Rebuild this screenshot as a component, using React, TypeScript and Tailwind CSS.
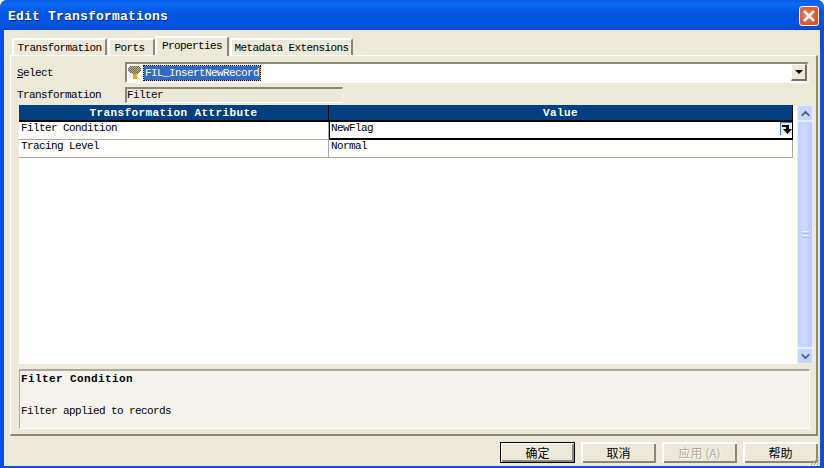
import { ChevronDown, ChevronUp } from 'lucide-react';

const MONO = "font-['Liberation_Mono',monospace] text-[11px] leading-[12px] tracking-[-0.6px] text-black";
const CJK = "font-['Noto_Sans_CJK_SC',sans-serif] text-[12px] leading-none";

// funnel outline, [first x, last x] per pixel row
const FUNNEL_ROWS = [[2, 10], [1, 11], [0, 12], [0, 12], [0, 12], [1, 11], [2, 10], [4, 9], [5, 8], [5, 8], [5, 8], [5, 8], [5, 8]];

function Tab({ label, active, width, textClass }: { label: string; active?: boolean; width: string; textClass?: string }) {
  return (
    <div className={`${width} ${active ? 'h-[20px] -mb-px relative z-10' : 'h-[17px]'} bg-[#ece9d8] border-t-2 border-l-2 border-r-2 border-t-white border-l-white border-r-[#8a8778] rounded-t-[2px] flex items-start justify-center pt-[2px]`}>
      <span className={`${MONO} ${textClass ?? ''}`}>{label}</span>
    </div>
  );
}

function DialogButton({ label, isDefault, disabled }: { label: string; isDefault?: boolean; disabled?: boolean }) {
  return (
    <div className={`w-[75px] h-[21px] bg-[#ece9d8] flex items-center justify-center ${CJK} ${isDefault ? 'border border-black shadow-[inset_1px_1px_0_#fff,inset_-2px_-2px_0_#8a8778]' : 'shadow-[inset_2px_2px_0_#fff,inset_-2px_-2px_0_#8a8778]'} ${disabled ? 'text-[#aca899] [text-shadow:1px_1px_0_#fff]' : 'text-black'}`}>
      {label}
    </div>
  );
}

function ScrollButton({ children }: { children: React.ReactNode }) {
  return (
    <div className="h-[16px] bg-[#c6d5fb] border border-[#e6edfe] rounded-[2px] flex items-center justify-center text-[#4d6185] shrink-0">
      {children}
    </div>
  );
}

function FilterIcon() {
  return (
    <svg width="14" height="14" viewBox="0 0 14 14" className="shrink-0" shapeRendering="crispEdges">
      {FUNNEL_ROWS.map(([from, to], y) => (
        <g key={y}>
          <rect x={from} y={y} width={to - from + 1} height="1" fill="#f2ae00" />
          {y < 8 &&
            Array.from({ length: to - from + 1 }, (_, i) => from + i)
              .filter((x) => (x + y) % 2 === 0)
              .map((x) => <rect key={x} x={x} y={y} width="1" height="1" fill="#4a6aa5" />)}
        </g>
      ))}
    </svg>
  );
}

function ExpandIcon() {
  return (
    <div className="w-[12px] h-[13px] bg-[#e8eef7] border-l border-t border-[#3f7fb5] flex items-center justify-center shrink-0">
      <svg width="10" height="10" viewBox="0 0 10 10">
        <path d="M0 1 H7 V5 H10 L5.5 10 L1 5 H4 V3 H0 Z" fill="#000" />
      </svg>
    </div>
  );
}

function HeaderCell({ label, width }: { label: string; width: string }) {
  return (
    <div className={`${width} flex items-center justify-center pt-[2px] border-r border-black font-['Liberation_Mono',monospace] font-bold text-[11px] leading-none tracking-[0.4px] text-white`}>
      {label}
    </div>
  );
}

export default function App() {
  return (
    <div className="w-[824px] h-[468px] flex flex-col bg-[#0a4fe0] rounded-t-[7px] overflow-hidden">
      {/* title bar */}
      <div className="h-[30px] shrink-0 flex items-center justify-between pl-[8px] pr-[5px] bg-[linear-gradient(180deg,#0a5be8_0%,#0a6af5_12%,#0054e0_45%,#0055e5_80%,#0048c8_100%)]">
        <span className="pt-[2px] font-['Liberation_Mono',monospace] font-bold text-[13px] leading-none tracking-[0.2px] text-white [text-shadow:1px_1px_0_#0a2a80]">
          Edit Transformations
        </span>
        <div className="mt-[2px] w-[20px] h-[20px] rounded-[3px] border border-white bg-[radial-gradient(circle_at_40%_40%,#ee7a52,#d9431e)] flex items-center justify-center">
          <svg width="14" height="14" viewBox="0 0 14 14">
            <path d="M2 2 L12 12 M12 2 L2 12" stroke="#fff" strokeWidth="2.6" />
          </svg>
        </div>
      </div>

      {/* client area */}
      <div className="flex-1 min-h-0 mx-[4px] mb-[2px] bg-[#ece9d8] flex flex-col pl-[6px] pr-[2px] relative">
        {/* tabs */}
        <div className="flex items-end h-[25px] pl-[2px] shrink-0 relative z-10">
          <Tab label="Transformation" width="w-[95px]" />
          <div className="w-[1px]" />
          <Tab label="Ports" width="w-[47px]" textClass="-ml-[4px]" />
          <Tab label="Properties" width="w-[74px]" active />
          <div className="w-[1px]" />
          <Tab label="Metadata Extensions" width="w-[123px]" />
        </div>

        {/* tab panel */}
        <div className="h-[381px] shrink-0 border-t border-l border-t-white border-l-white border-r-2 border-b-2 border-r-[#8a8778] border-b-[#8a8778] pl-[8px] pr-[6px] pt-[6px] flex flex-col">
          <div className="flex items-center h-[21px]">
            <span className={`${MONO} w-[108px] -ml-[2px]`}>
              <span className="underline">S</span>elect
            </span>
            <div className="w-[684px] h-[21px] bg-white border-2 border-t-[#8a8778] border-l-[#8a8778] border-r-[#f5f3ea] border-b-white flex items-center pl-[1px]">
              <FilterIcon />
              <span className="ml-[2px] bg-[#316ac5] text-white font-['Liberation_Mono',monospace] text-[11px] leading-[14px] tracking-[-0.6px] outline-1 outline-dotted outline-black shadow-[0_0_0_1px_#e8c060] px-[1px]">
                FIL_InsertNewRecord
              </span>
              <div className="ml-auto w-[16px] h-[17px] bg-[#ece9d8] border border-t-white border-l-white border-r-2 border-b-2 border-r-[#716f64] border-b-[#716f64] flex items-center justify-center">
                <div className="w-0 h-0 border-x-[4px] border-x-transparent border-t-[4px] border-t-black" />
              </div>
            </div>
          </div>

          <div className="flex items-center h-[17px] mt-[3px]">
            <span className={`${MONO} w-[108px] -ml-[2px]`}>Transformation</span>
            <div className={`${MONO} w-[218px] h-[16px] border-t-2 border-l-2 border-r border-b border-t-[#8a8778] border-l-[#8a8778] border-r-[#f5f3ea] border-b-white flex items-center`}>
              Filter
            </div>
          </div>

          {/* grid + scrollbar */}
          <div className="flex mt-[2px] h-[259px] w-[794px] shrink-0 bg-white">
            <div className="w-[774px] flex flex-col shrink-0">
              <div className="flex h-[17px] bg-[#004080] border-b-2 border-black shrink-0">
                <HeaderCell label="Transformation Attribute" width="w-[310px]" />
                <HeaderCell label="Value" width="flex-1" />
              </div>
              <div className="flex h-[18px] border-b border-[#aca899] shrink-0">
                <div className={`${MONO} w-[310px] pl-[2px] border-r border-[#aca899]`}>Filter Condition</div>
                <div className={`${MONO} flex-1 pl-[1px] border-b-2 border-l border-r border-black h-[18px] flex justify-between items-start`}>
                  <span>NewFlag</span>
                  <ExpandIcon />
                </div>
              </div>
              <div className="flex h-[18px] border-b border-[#aca899] shrink-0">
                <div className={`${MONO} w-[310px] pl-[2px] border-r border-[#aca899]`}>Tracing Level</div>
                <div className={`${MONO} flex-1 pl-[2px] border-r border-[#aca899]`}>Normal</div>
              </div>
            </div>

            <div className="w-[16px] ml-[4px] flex flex-col bg-[#f3f5fd] shrink-0">
              <ScrollButton><ChevronUp size={13} strokeWidth={3.5} /></ScrollButton>
              <div className="flex-1 bg-[linear-gradient(90deg,#c3d3fd,#cbd9fe_50%,#b8c9f7)] border border-[#e6edfe] rounded-[2px] flex flex-col items-center justify-center gap-[1px]">
                <div className="w-[7px] h-[1px] bg-[#eef3fe]" />
                <div className="w-[7px] h-[1px] bg-[#a8bcf0]" />
                <div className="w-[7px] h-[1px] bg-[#eef3fe]" />
                <div className="w-[7px] h-[1px] bg-[#a8bcf0]" />
              </div>
              <ScrollButton><ChevronDown size={13} strokeWidth={3.5} /></ScrollButton>
            </div>
          </div>

          {/* description */}
          <div className="mt-[5px] h-[60px] w-[791px] shrink-0 bg-[#f5f4ec] border-t-2 border-l border-t-[#aca899] border-l-[#aca899] border-r border-b border-r-white border-b-white pl-[1px] pt-[2px]">
            <div className="font-['Liberation_Mono',monospace] font-bold text-[11px] leading-[12px] tracking-[0.4px] text-black">Filter Condition</div>
            <div className={`${MONO} mt-[20px]`}>Filter applied to records</div>
          </div>
        </div>

        {/* buttons */}
        <div className="flex justify-end gap-[6px] pt-[6px] shrink-0">
          <DialogButton label="确定" isDefault />
          <DialogButton label="取消" />
          <DialogButton label="应用 (A)" disabled />
          <DialogButton label="帮助" />
        </div>

        {/* resize grip */}
        <svg width="12" height="12" viewBox="0 0 12 12" className="absolute right-0 bottom-0">
          <path d="M11 3 L3 11 M11 6 L6 11 M11 9 L9 11" stroke="#aca899" strokeWidth="1" />
        </svg>
      </div>
    </div>
  );
}
